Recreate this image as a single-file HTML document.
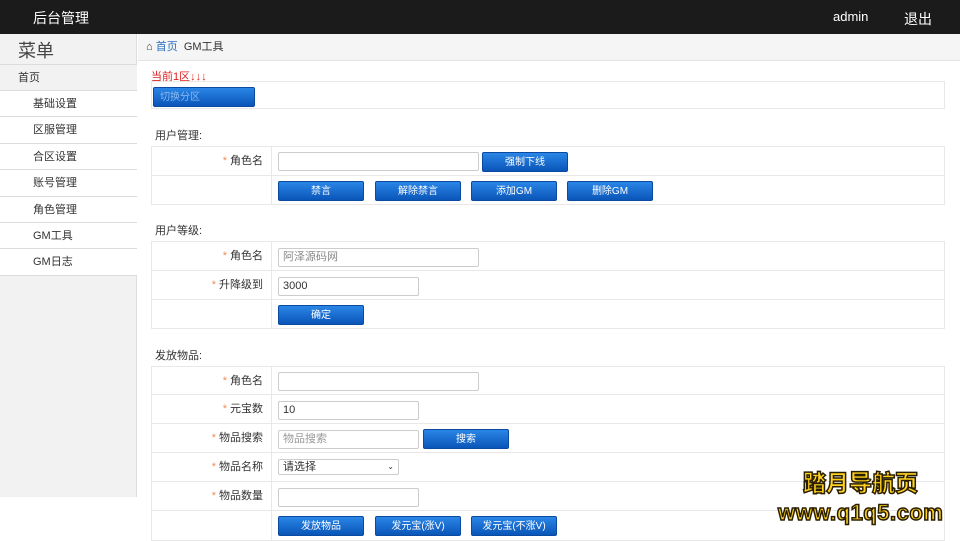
<!DOCTYPE html>
<html><head><meta charset="utf-8"><style>
*{margin:0;padding:0;box-sizing:border-box}
body{width:960px;height:540px;overflow:hidden;background:#fff;font-family:"Liberation Sans","Noto Sans CJK SC",sans-serif;font-size:11px;color:#333;position:relative}
.a{position:absolute}
.top{left:0;top:0;width:960px;height:34px;background:#1b1b1b;color:#fff;font-size:14px}
.side{left:0;top:34px;width:137px;height:463px;background:#f2f2f2;border-right:1px solid #ddd}
.mi{position:absolute;left:0;width:137px;height:26px;border-bottom:1px solid #dcdcdc;background:#fff;line-height:26px;padding-left:33px}
.bc{left:138px;top:34px;width:822px;height:27px;background:#f5f5f5;border-bottom:1px solid #e5e5e5;line-height:26px;padding-left:8px}
.row{position:absolute;left:151px;width:794px;border:1px solid #e8e8e8;border-top:none}
.row .l{position:absolute;left:0;top:0;bottom:0;width:120px;border-right:1px solid #e8e8e8;text-align:right;padding-right:8px}
.st{color:#f08c5a;margin-right:3px}
.in{position:absolute;height:19px;border:1px solid #ccc;border-radius:2px;background:#fff;padding-left:4px;line-height:17px}
.btn{position:absolute;height:20px;width:86px;background:linear-gradient(#2a86e6,#0a55b8);border-radius:2px;color:#fff;text-align:center;line-height:20px;font-size:10px;border:1px solid #0a4aa0}
.h{position:absolute;left:155px}
</style></head><body>
<div class="a top"><span class="a" style="left:33px;top:8px">后台管理</span><span class="a" style="left:833px;top:9px;font-size:13px">admin</span><span class="a" style="left:904px;top:9px">退出</span></div>
<div class="a side">
<div class="a" style="left:18px;top:3px;font-size:18px;color:#444">菜单</div>
<div class="mi" style="top:30px;padding-left:18px;background:#f2f2f2;border-top:1px solid #dcdcdc;height:27px">首页</div>
<div class="mi" style="top:57px">基础设置</div>
<div class="mi" style="top:83px;height:27px">区服管理</div>
<div class="mi" style="top:110px">合区设置</div>
<div class="mi" style="top:136px;height:27px">账号管理</div>
<div class="mi" style="top:163px">角色管理</div>
<div class="mi" style="top:189px">GM工具</div>
<div class="mi" style="top:215px;height:27px">GM日志</div>
</div>
<div class="a bc"><span style="color:#333">&#8962;</span> <span style="color:#2a6fc0">首页</span> &nbsp;GM工具</div>
<div class="a" style="left:151px;top:68px;color:#e02020">当前1区↓↓↓</div>
<div class="row" style="top:81px;height:28px;border-top:1px solid #e8e8e8"></div>
<div class="btn" style="left:153px;top:87px;width:102px;color:#8ab8f0;text-align:left;padding-left:6px">切换分区</div>
<div class="h" style="top:127px">用户管理:</div>
<div class="row" style="top:146px;height:30px;border-top:1px solid #e8e8e8"><div class="l" style="line-height:28px"><span class="st">*</span>角色名</div></div>
<div class="row" style="top:176px;height:29px"><div class="l"></div></div>
<div class="in" style="left:278px;top:152px;width:201px"></div>
<div class="btn" style="left:482px;top:152px">强制下线</div>
<div class="btn" style="left:278px;top:181px">禁言</div>
<div class="btn" style="left:375px;top:181px">解除禁言</div>
<div class="btn" style="left:471px;top:181px">添加GM</div>
<div class="btn" style="left:567px;top:181px">删除GM</div>
<div class="h" style="top:222px">用户等级:</div>
<div class="row" style="top:241px;height:30px;border-top:1px solid #e8e8e8"><div class="l" style="line-height:28px"><span class="st">*</span>角色名</div></div>
<div class="row" style="top:271px;height:29px"><div class="l" style="line-height:28px"><span class="st">*</span>升降级到</div></div>
<div class="row" style="top:300px;height:29px"><div class="l"></div></div>
<div class="in" style="left:278px;top:248px;width:201px;color:#888">阿泽源码网</div>
<div class="in" style="left:278px;top:277px;width:141px">3000</div>
<div class="btn" style="left:278px;top:305px">确定</div>
<div class="h" style="top:347px">发放物品:</div>
<div class="row" style="top:366px;height:29px;border-top:1px solid #e8e8e8"><div class="l" style="line-height:28px"><span class="st">*</span>角色名</div></div>
<div class="row" style="top:395px;height:29px"><div class="l" style="line-height:28px"><span class="st">*</span>元宝数</div></div>
<div class="row" style="top:424px;height:29px"><div class="l" style="line-height:28px"><span class="st">*</span>物品搜索</div></div>
<div class="row" style="top:453px;height:29px"><div class="l" style="line-height:28px"><span class="st">*</span>物品名称</div></div>
<div class="row" style="top:482px;height:29px"><div class="l" style="line-height:28px"><span class="st">*</span>物品数量</div></div>
<div class="row" style="top:511px;height:30px"><div class="l"></div></div>
<div class="in" style="left:278px;top:372px;width:201px"></div>
<div class="in" style="left:278px;top:401px;width:141px">10</div>
<div class="in" style="left:278px;top:430px;width:141px;color:#999">物品搜索</div>
<div class="btn" style="left:423px;top:429px">搜索</div>
<div class="in" style="left:278px;top:459px;width:121px;height:16px;line-height:14px">请选择<span style="position:absolute;right:4px;font-size:8px">&#8964;</span></div>
<div class="in" style="left:278px;top:488px;width:141px"></div>
<div class="btn" style="left:278px;top:516px">发放物品</div>
<div class="btn" style="left:375px;top:516px">发元宝(涨V)</div>
<div class="btn" style="left:471px;top:516px">发元宝(不涨V)</div>
<div class="a" style="left:803px;top:464px;font-size:23px;font-weight:900;color:#ffd21f;-webkit-text-stroke:1.5px #2a1e00;letter-spacing:0px">踏月导航页</div>
<div class="a" style="left:778px;top:500px;font-size:22px;font-weight:900;color:#ffd21f;-webkit-text-stroke:1.5px #2a1e00;letter-spacing:0.5px">www.q1q5.com</div>
</body></html>
